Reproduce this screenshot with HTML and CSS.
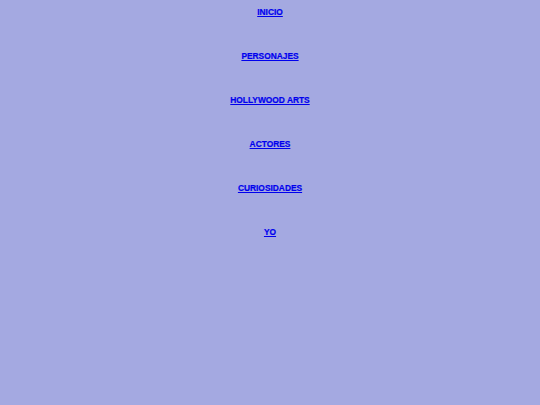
FILE: index.html
```html
<!DOCTYPE html>
<html>
<head>
<meta charset="utf-8">
<link rel="stylesheet" href="styles.css">
</head>
<body>
<nav class="menu">
  <a href="#">INICIO</a>
  <a href="#">PERSONAJES</a>
  <a href="#">HOLLYWOOD ARTS</a>
  <a href="#">ACTORES</a>
  <a href="#">CURIOSIDADES</a>
  <a href="#">YO</a>
</nav>
</body>
</html>
```
FILE: styles.css
```css
html, body {
  margin: 0;
  background: #a4a9e1;
}
.menu {
  display: flex;
  flex-direction: column;
  align-items: center;
  padding-top: 7px;
  gap: 34px;
  font-family: "Liberation Sans", Arial, sans-serif;
  font-weight: bold;
  font-size: 8.4px;
  line-height: 10px;
}
.menu a {
  color: #0000ee;
  text-decoration: underline;
  -webkit-text-stroke: 0.2px #0000ee;
}
```
